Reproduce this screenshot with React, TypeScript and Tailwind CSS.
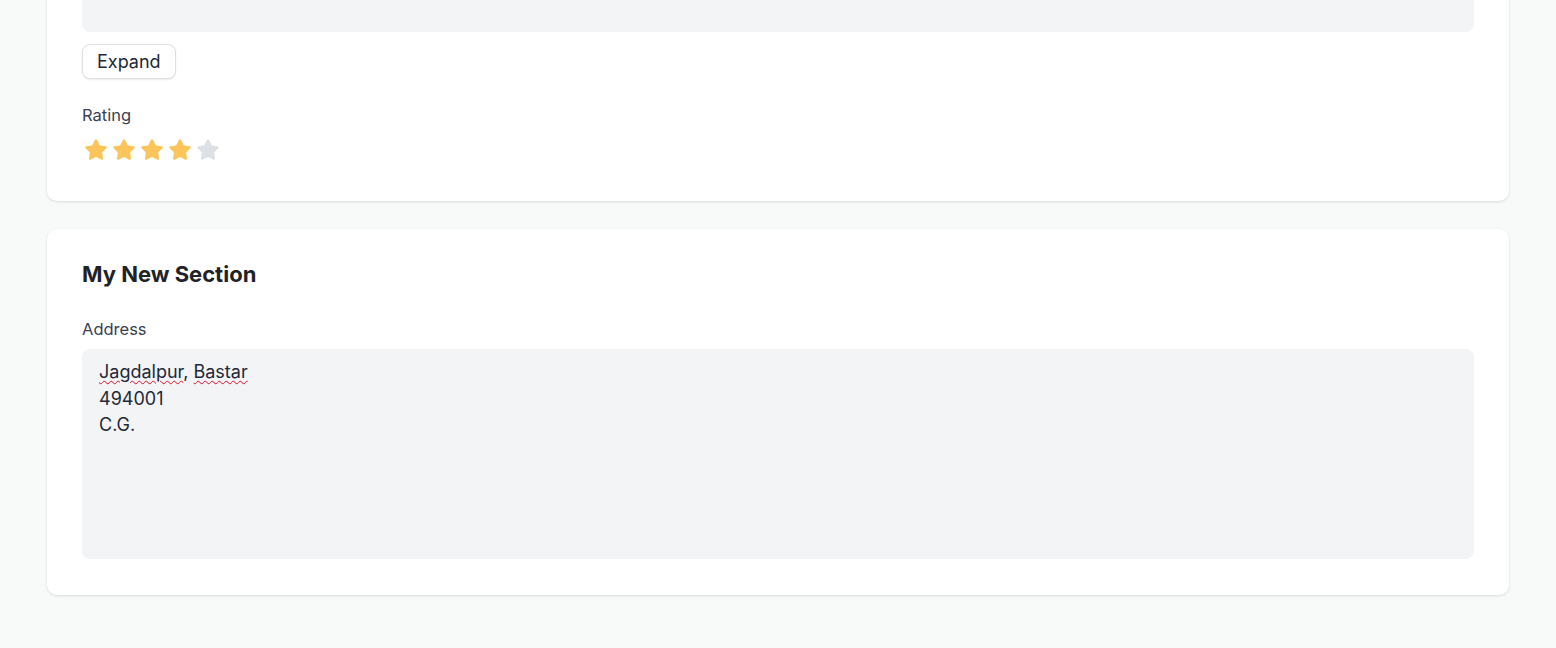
import { Star } from 'lucide-react';

const font = { fontFamily: 'Inter, "Noto Sans", sans-serif' };

function Stars({ value }: { value: number }) {
  return (
    <div className="ml-[2px] flex items-center gap-[4px]">
      {[1, 2, 3, 4, 5].map((i) => (
        <Star
          key={i}
          className={
            i <= value
              ? 'h-[24px] w-[24px] fill-[#fcc55b] text-[#fcc55b]'
              : 'h-[24px] w-[24px] fill-[#dde1e4] text-[#dde1e4]'
          }
          strokeWidth={1.5}
          strokeLinejoin="round"
        />
      ))}
    </div>
  );
}

export default function App() {
  return (
    <div className="min-h-screen bg-[#f8f9f9] px-[47px] pb-[60px] text-[#232838]" style={font}>
      {/* first card, scrolled partly out of view */}
      <div className="-mt-[130px] rounded-[10px] bg-white px-[35px] pt-[35px] pb-[39px] shadow-[0_1px_3px_rgba(0,0,0,0.12)]">
        <div className="h-[127px] rounded-[8px] bg-[#f3f4f6]" />
        <button
          type="button"
          className="mt-[12px] h-[35px] rounded-[8px] border border-[#dcdfe3] bg-white px-[14px] text-[18px] leading-[24px] text-[#232838] shadow-[0_1px_2px_rgba(0,0,0,0.08)]"
        >
          Expand
        </button>
        <div className="mt-[25px] text-[16.5px] leading-[22px] text-[#3a4151]">Rating</div>
        <div className="mt-[12px]">
          <Stars value={4} />
        </div>
      </div>

      <div className="mt-[28px] rounded-[10px] bg-white px-[35px] pt-[31px] pb-[36px] shadow-[0_1px_3px_rgba(0,0,0,0.12)]">
        <h2 className="text-[22px] font-bold leading-[28px] text-[#1f2328]">My New Section</h2>
        <label className="mt-[30px] mb-[9px] block text-[16.5px] leading-[22px] text-[#3a4151]">Address</label>
        <div className="h-[210px] rounded-[8px] bg-[#f3f4f6] px-[17px] pt-[10px] text-[18px] leading-[26.5px] text-[#232838]">
          <div>
            <span className="underline decoration-[#e0102b] decoration-wavy decoration-1 underline-offset-[2px]">Jagdalpur</span>
            ,{' '}
            <span className="underline decoration-[#e0102b] decoration-wavy decoration-1 underline-offset-[2px]">Bastar</span>
          </div>
          <div>494001</div>
          <div>C.G.</div>
        </div>
      </div>
    </div>
  );
}
